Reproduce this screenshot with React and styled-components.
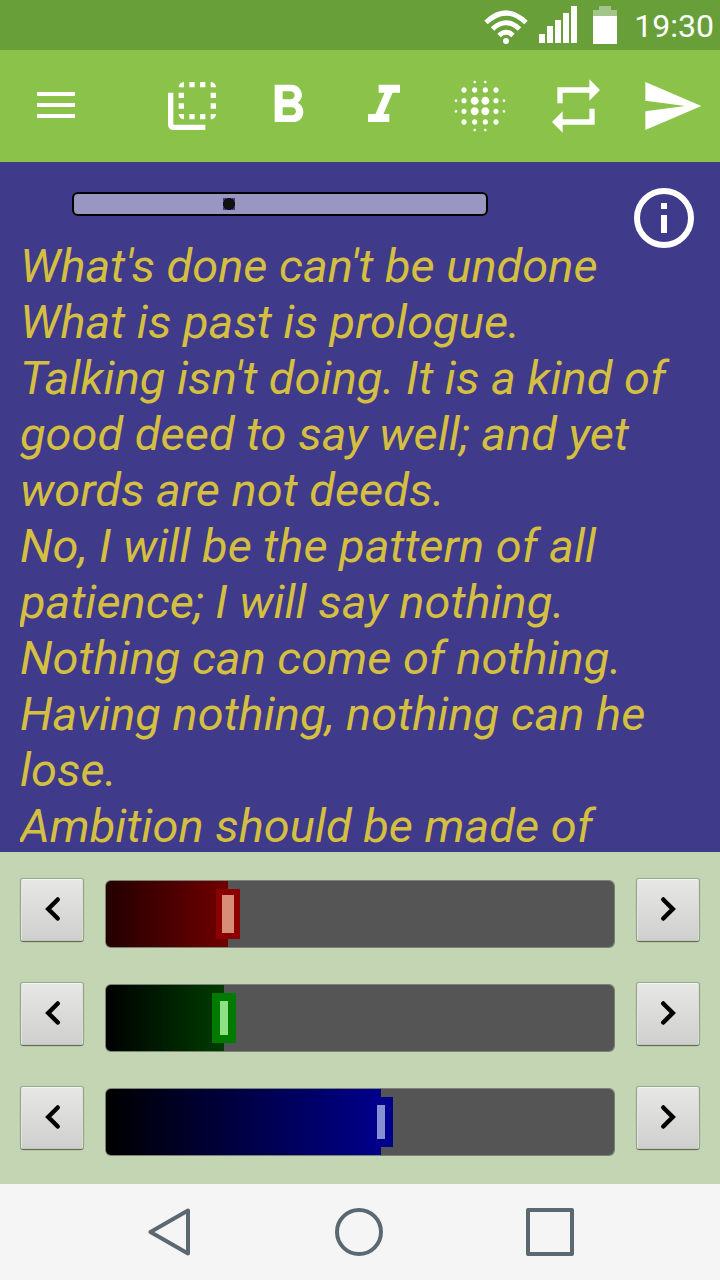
import React, { useState } from "react";
import styled, { createGlobalStyle } from "styled-components";
import {
  MdFlipToBack,
  MdFormatBold,
  MdFormatItalic,
  MdBlurOn,
  MdRepeat,
  MdSend,
} from "react-icons/md";

const GlobalStyle = createGlobalStyle`
  * { box-sizing: border-box; }
  body {
    margin: 0;
    font-family: Roboto, "Liberation Sans", sans-serif;
  }
`;

const Screen = styled.div`
  display: flex;
  flex-direction: column;
  height: 100vh;
`;

const StatusBar = styled.div`
  display: flex;
  flex: none;
  align-items: center;
  justify-content: flex-end;
  height: 50px;
  padding: 2px 6px 0 0;
  background: #689f38;
  color: #fff;
  svg { display: block; margin-bottom: 2px; }
`;

const WifiIcon = styled.svg`
  margin-right: 11px;
`;

const SignalIcon = styled.svg`
  margin-right: 16px;
`;

const BatteryIcon = styled.svg`
  margin-right: 17px;
`;

const Clock = styled.time`
  font-size: 32px;
  line-height: 38px;
`;

const PlainButton = styled.button`
  display: flex;
  align-items: center;
  justify-content: center;
  padding: 0;
  border: 0;
  background: none;
  color: inherit;
  cursor: pointer;
`;

const Toolbar = styled.header`
  display: flex;
  flex: none;
  height: 112px;
  background: #8bc34a;
  color: #fff;
`;

const MenuButton = styled(PlainButton)`
  width: 112px;
  margin-right: auto;
`;

const ToolButton = styled(PlainButton)`
  width: 96px;
  font-size: 64px;
`;

const Preview = styled.main`
  position: relative;
  flex: 1;
  min-height: 0;
  overflow: hidden;
  padding: 30px 20px 0;
  background: #3f3b8a;
`;

const ScaleSlider = styled.input`
  display: block;
  width: calc(100% - 264px);
  height: 24px;
  margin: 0 0 22px 52px;
  appearance: none;
  border: 2px solid #000;
  border-radius: 6px;
  background: #9a96c2;
  &::-webkit-slider-thumb {
    appearance: none;
    width: 12px;
    height: 12px;
    background: radial-gradient(circle, #111 6px, #3f3b8a 6px);
  }
`;

const InfoButton = styled(PlainButton)`
  position: absolute;
  top: 26px;
  right: 26px;
  width: 60px;
  height: 60px;
`;

const Quotes = styled.div`
  overflow: hidden;
  color: #d5bf41;
  font-size: 47px;
  font-style: italic;
  line-height: 56px;
  p { margin: 0; }
`;

const Mixer = styled.section`
  display: flex;
  flex: none;
  flex-direction: column;
  gap: 35px;
  padding: 27px 21px 28px;
  background: #c4d5b3;
`;

const ChannelRow = styled.div`
  display: flex;
  align-items: flex-start;
  gap: 22px;
`;

const StepButton = styled(PlainButton)`
  width: 62px;
  height: 62px;
  border: 1px solid;
  border-color: #f4f4f2 #dcdcda #c4c4c2 #e4e4e2;
  border-radius: 2px;
  background: linear-gradient(#e7e7e5, #cfcfcd);
  box-shadow: 0 0 1px 1px rgba(70, 80, 60, 0.35), 0 1px 1px rgba(40, 50, 30, 0.6);
  color: #000;
`;

const Track = styled.div`
  flex: 1;
  min-width: 0;
  height: 68px;
  margin-top: 1px;
  border: 1px solid rgba(85, 85, 85, 0.65);
  border-radius: 6px;
  background: #555;
  background-clip: padding-box;
`;

const TrackFill = styled.div`
  height: 100%;
  border-radius: 5px 0 0 5px;
  background: linear-gradient(to right, ${(p) => p.$from}, ${(p) => p.$to});
`;

const ChannelSlider = styled.input`
  display: block;
  width: calc(100% + 24px);
  height: 66px;
  margin: -66px -12px 0;
  appearance: none;
  background: none;
  &::-webkit-slider-thumb {
    appearance: none;
    width: 24px;
    height: 50px;
    border: ${(p) => p.$frame}px solid ${(p) => p.$color};
    background: ${(p) => p.$core};
  }
`;

const NavBar = styled.nav`
  display: flex;
  flex: none;
  align-items: center;
  justify-content: center;
  gap: 143px;
  height: 96px;
  padding-right: 2px;
  background: #f5f5f5;
  color: #5a6872;
`;

const lines = [
  "What's done can't be undone",
  "What is past is prologue.",
  "Talking isn't doing. It is a kind of good deed to say well; and yet words are not deeds.",
  "No, I will be the pattern of all patience; I will say nothing.",
  "Nothing can come of nothing.",
  "Having nothing, nothing can he lose.",
  "Ambition should be made of",
];

const tools = [
  { label: "Background", Icon: MdFlipToBack },
  { label: "Bold", Icon: MdFormatBold },
  { label: "Italic", Icon: MdFormatItalic },
  { label: "Blur", Icon: MdBlurOn },
  { label: "Swap colours", Icon: MdRepeat },
  { label: "Send", Icon: MdSend },
];

const channels = [
  { name: "Red", start: 61, from: "#240000", to: "#700000", color: "#8b0000", core: "#d68e79", frame: 6 },
  { name: "Green", start: 59, from: "#000000", to: "#003c00", color: "#007a00", core: "#90e086", frame: 8 },
  { name: "Blue", start: 138, from: "#000000", to: "#00008b", color: "#00008b", core: "#8690d2", frame: 8 },
];

function Chevron({ left }) {
  return (
    <svg width="24" height="28" viewBox="0 0 24 28" fill="none" stroke="currentColor" strokeWidth="4.5" strokeLinecap="round">
      <path d={left ? "M17.750 3.500L8.250 13L17.750 22.500" : "M7.250 3.500L16.750 13L7.250 22.500"} />
    </svg>
  );
}

function Channel({ name, start, from, to, color, core, frame }) {
  const [value, setValue] = useState(start);
  const step = (d) => setValue((v) => Math.max(0, Math.min(255, v + d)));
  return (
    <ChannelRow>
      <StepButton aria-label={`Less ${name}`} onClick={() => step(-1)}>
        <Chevron left />
      </StepButton>
      <Track>
        <TrackFill $from={from} $to={to} style={{ width: `${(value / 255) * 100}%` }} />
        <ChannelSlider
          type="range"
          min="0"
          max="255"
          aria-label={name}
          value={value}
          onChange={(e) => setValue(Number(e.target.value))}
          $color={color}
          $core={core}
          $frame={frame}
        />
      </Track>
      <StepButton aria-label={`More ${name}`} onClick={() => step(1)}>
        <Chevron />
      </StepButton>
    </ChannelRow>
  );
}

export default function App() {
  return (
    <Screen>
      <GlobalStyle />
      <StatusBar>
        <WifiIcon width="44" height="38" viewBox="0 0 44 38" fill="none" stroke="currentColor" strokeWidth="5">
          <path d="M2 16.5Q22 -2.500 42 16.500" />
          <path d="M8.500 23Q22 10.500 35.500 23" />
          <path d="M15 29.500Q22 23 29 29.500" />
          <circle cx="22" cy="35" r="3" fill="currentColor" stroke="none" />
        </WifiIcon>
        <SignalIcon width="38" height="38" viewBox="0 0 38 38" fill="currentColor">
          <path d="M0 28h6v9H0zM8 20h6v17H8zM16 14h6v23h-6zM24 7h6v30h-6zM32 0h6v37h-6z" />
        </SignalIcon>
        <BatteryIcon width="24" height="38" viewBox="0 0 24 38" fill="currentColor">
          <path fill="#a4c589" d="M6 0h12v4h6v6H0V4h6z" />
          <path d="M0 10h24v28H0z" />
        </BatteryIcon>
        <Clock>19:30</Clock>
      </StatusBar>

      <Toolbar>
        <MenuButton aria-label="Menu">
          <svg width="38" height="28" viewBox="0 0 38 28" fill="currentColor">
            <path d="M0 0h38v4H0zM0 11h38v4H0zM0 22h38v4H0z" />
          </svg>
        </MenuButton>
        {tools.map(({ label, Icon }) => (
          <ToolButton key={label} aria-label={label}>
            <Icon />
          </ToolButton>
        ))}
      </Toolbar>

      <Preview>
        <ScaleSlider type="range" min="0" max="400" defaultValue="149" aria-label="Text size" />
        <Quotes>
          {lines.map((line) => (
            <p key={line}>{line}</p>
          ))}
        </Quotes>
        <InfoButton aria-label="Information">
          <svg width="60" height="60" viewBox="0 0 60 60" fill="#fff">
            <circle cx="30" cy="30" r="27" fill="none" stroke="#fff" strokeWidth="6" />
            <path d="M27 15h6v6h-6zM27 27h6v18h-6z" />
          </svg>
        </InfoButton>
      </Preview>

      <Mixer>
        {channels.map((c) => (
          <Channel key={c.name} {...c} />
        ))}
      </Mixer>

      <NavBar>
        <PlainButton aria-label="Back">
          <svg width="48" height="48" viewBox="0 0 48 48" fill="none" stroke="currentColor" strokeWidth="4" strokeLinejoin="round">
            <path d="M44 2.500V45.500L6.500 24Z" />
          </svg>
        </PlainButton>
        <PlainButton aria-label="Home">
          <svg width="48" height="48" viewBox="0 0 48 48" fill="none" stroke="currentColor" strokeWidth="4">
            <circle cx="24" cy="24" r="22" />
          </svg>
        </PlainButton>
        <PlainButton aria-label="Recent apps">
          <svg width="48" height="48" viewBox="0 0 48 48" fill="none" stroke="currentColor" strokeWidth="4" strokeLinejoin="round">
            <path d="M2 2h44v44H2z" />
          </svg>
        </PlainButton>
      </NavBar>
    </Screen>
  );
}
